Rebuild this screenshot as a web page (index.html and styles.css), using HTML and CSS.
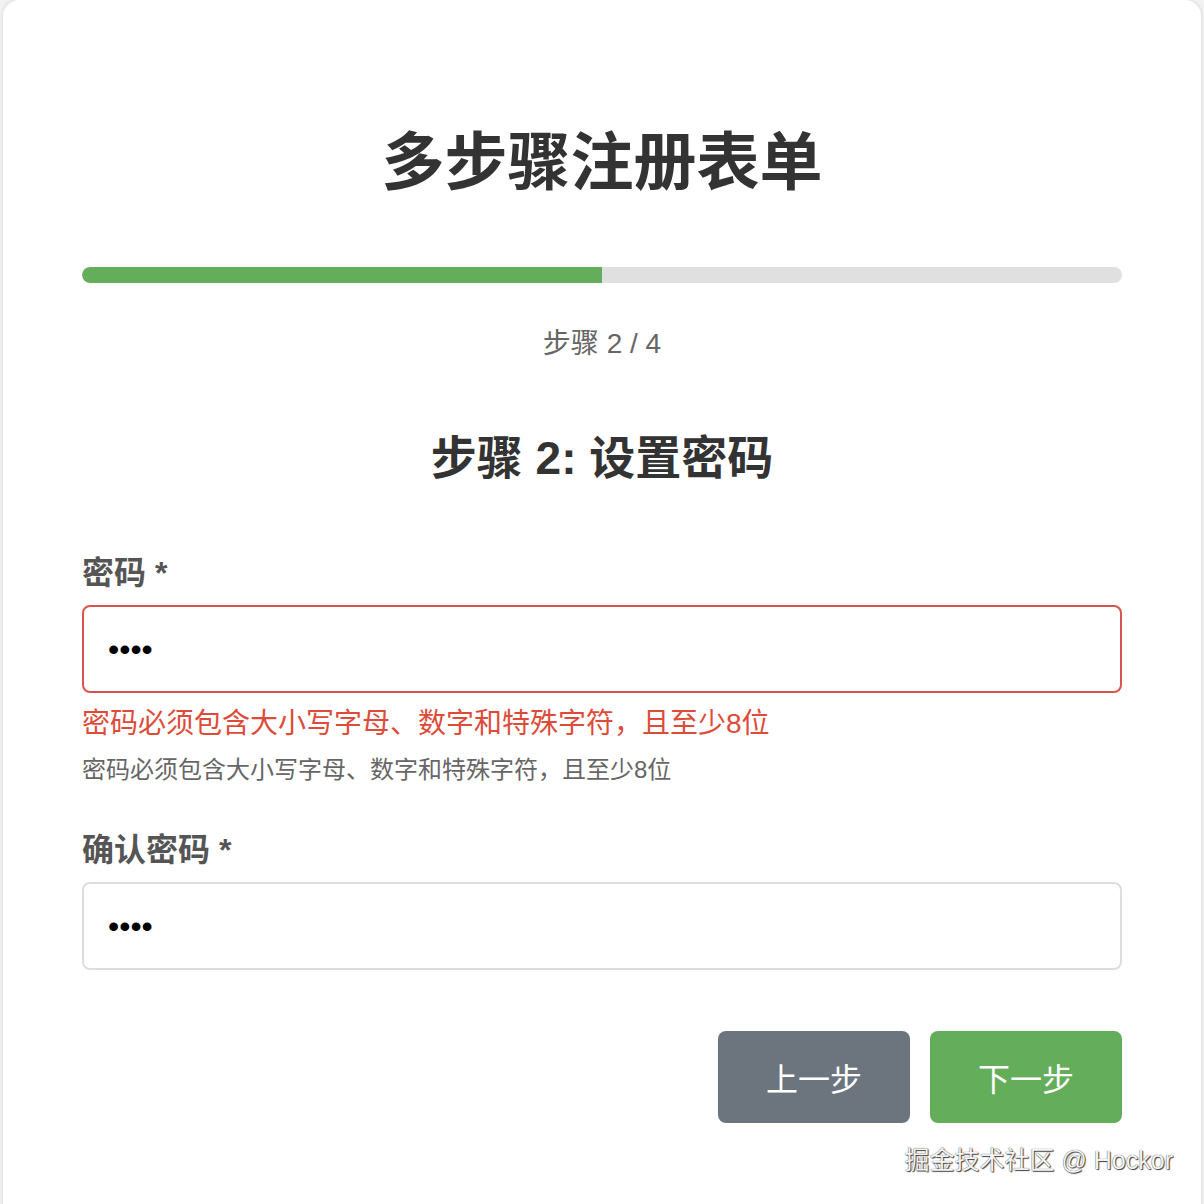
FILE: index.html
```html
<!DOCTYPE html>
<html lang="zh-CN">
<head>
<meta charset="utf-8">
<title>多步骤注册表单</title>
<link rel="stylesheet" href="styles.css">
</head>
<body>
<div class="page">
  <div class="card">
    <h1 class="title">多步骤注册表单</h1>
    <div class="progress"><div class="progress-fill" style="width:50%"></div></div>
    <div class="step-count">步骤 2 / 4</div>
    <h2 class="step-title">步骤 2: 设置密码</h2>
    <div class="field">
      <label class="label">密码 *</label>
      <input class="input input-error" type="password" value="abcd">
      <div class="error">密码必须包含大小写字母、数字和特殊字符，且至少8位</div>
      <div class="hint">密码必须包含大小写字母、数字和特殊字符，且至少8位</div>
    </div>
    <div class="field field-2">
      <label class="label">确认密码 *</label>
      <input class="input" type="password" value="abcd">
    </div>
    <div class="actions">
      <button class="btn btn-prev">上一步</button>
      <button class="btn btn-next">下一步</button>
    </div>
  </div>
  <div class="watermark">掘金技术社区 @ Hockor</div>
</div>
</body>
</html>
```
FILE: styles.css
```css
html, body {
  margin: 0;
  padding: 0;
  background: #f2f2f2;
  font-family: "Liberation Sans", "Noto Sans CJK SC", sans-serif;
}
.page {
  position: relative;
  width: 1204px;
  height: 1204px;
  overflow: hidden;
}
.card {
  box-sizing: border-box;
  margin: 0 3px;
  height: 1240px;
  background: #fff;
  border-radius: 16px;
  box-shadow: 0 0 4px rgba(0,0,0,0.12);
  padding: 0 79px;
  display: flex;
  flex-direction: column;
}
.title {
  margin: 122px 0 0;
  font-size: 63px;
  line-height: 80px;
  font-weight: 700;
  color: #333;
  text-align: center;
}
.progress {
  margin-top: 65px;
  height: 16px;
  border-radius: 8px;
  background: #e0e0e0;
  overflow: hidden;
}
.progress-fill {
  height: 100%;
  background: #64ad5a;
  border-radius: 8px 0 0 8px;
}
.step-count {
  margin-top: 41px;
  font-size: 28px;
  line-height: 40px;
  color: #666;
  text-align: center;
}
.step-title {
  margin: 64px 0 0;
  font-size: 46px;
  line-height: 60px;
  font-weight: 700;
  color: #333;
  text-align: center;
}
.field {
  margin-top: 63px;
  display: flex;
  flex-direction: column;
}
.field-2 {
  margin-top: 41px;
}
.label {
  font-size: 32px;
  line-height: 44px;
  font-weight: 700;
  color: #555;
  margin-bottom: 10px;
}
.input {
  box-sizing: border-box;
  height: 88px;
  width: 100%;
  border: 2px solid #ddd;
  border-radius: 8px;
  padding: 0 24px;
  font-size: 32px;
  font-family: "Liberation Sans", sans-serif;
  color: #000;
  background: #fff;
  outline: none;
}
.input-error {
  border-color: #d9534f;
}
.error {
  margin-top: 11px;
  font-size: 28px;
  line-height: 40px;
  color: #dd4b39;
}
.hint {
  margin-top: 9px;
  font-size: 24px;
  line-height: 34px;
  color: #666;
}
.actions {
  margin-top: 61px;
  display: flex;
  justify-content: flex-end;
  gap: 20px;
}
.btn {
  width: 192px;
  height: 92px;
  border: none;
  border-radius: 8px;
  font-size: 32px;
  font-family: "Liberation Sans", "Noto Sans CJK SC", sans-serif;
  color: #fff;
  cursor: pointer;
}
.btn-prev {
  background: #6c757d;
}
.btn-next {
  background: #64ad5a;
}
.watermark {
  position: absolute;
  right: 31px;
  top: 1142px;
  font-size: 25px;
  line-height: 36px;
  color: #f4f4f4;
  text-shadow: 0 0 1px #222, 1px 1px 1px #444;
}
```
